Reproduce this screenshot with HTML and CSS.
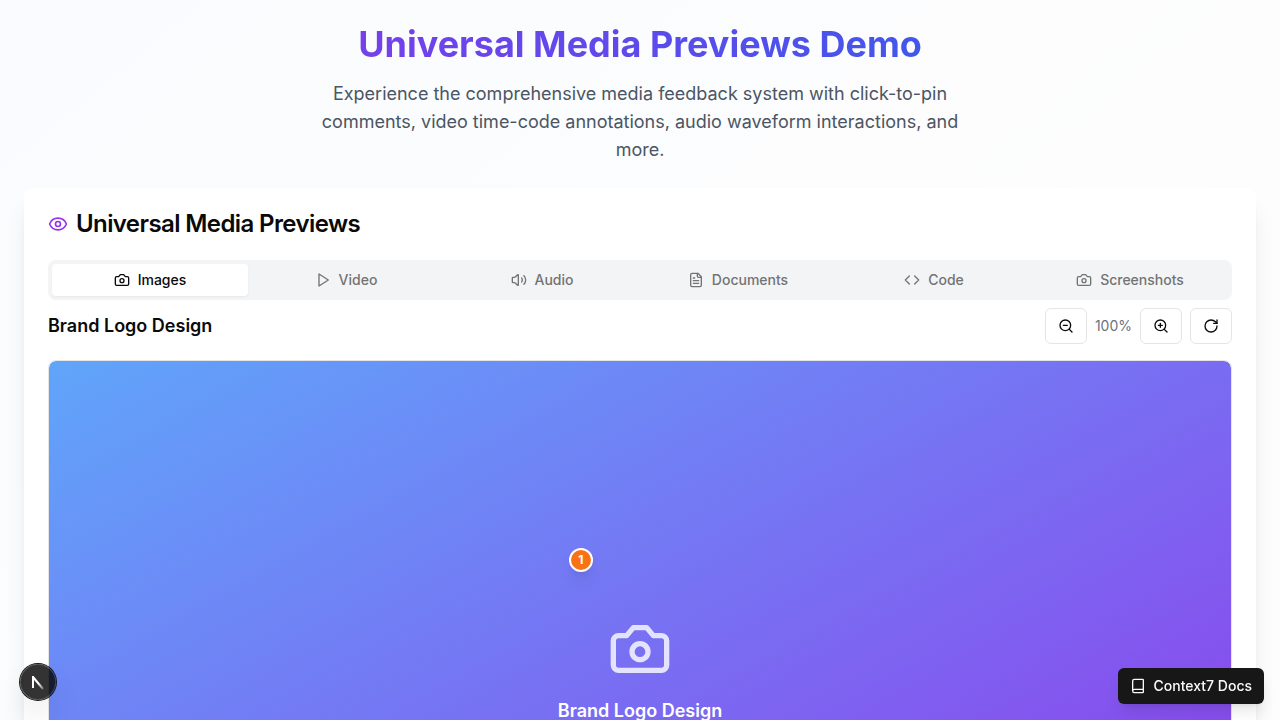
FILE: index.html
```html
<!DOCTYPE html>
<html lang="en">
<head>
<meta charset="utf-8">
<meta name="viewport" content="width=device-width, initial-scale=1">
<title>Universal Media Previews Demo</title>
<link rel="stylesheet" href="styles.css">
</head>
<body>
<svg class="sprite" aria-hidden="true">
  <symbol id="camera" viewBox="0 0 24 24"><path d="M14.5 4h-5L7 7H4a2 2 0 0 0-2 2v9a2 2 0 0 0 2 2h16a2 2 0 0 0 2-2V9a2 2 0 0 0-2-2h-3l-2.500-3z"/><circle cx="12" cy="13" r="3"/></symbol>
</svg>
<main class="page">
  <header class="intro">
    <h1 class="intro-title">Universal Media Previews Demo</h1>
    <p class="intro-text">Experience the comprehensive media feedback system with click-to-pin comments, video time-code annotations, audio waveform interactions, and more.</p>
  </header>
  <section class="card">
    <h2 class="card-title">
      <svg class="icon icon-eye" viewBox="0 0 24 24"><path d="M2.062 12.348a1 1 0 0 1 0-.696 10.750 10.750 0 0 1 19.876 0 1 1 0 0 1 0 .696 10.750 10.750 0 0 1-19.876 0"/><circle cx="12" cy="12" r="3"/></svg>
      Universal Media Previews
    </h2>
    <div class="tabs" role="tablist">
      <button class="tab tab-active" role="tab" aria-selected="true"><svg class="icon"><use href="#camera"/></svg>Images</button>
      <button class="tab" role="tab" aria-selected="false"><svg class="icon" viewBox="0 0 24 24"><path d="M6 3l14 9-14 9V3z"/></svg>Video</button>
      <button class="tab" role="tab" aria-selected="false"><svg class="icon" viewBox="0 0 24 24"><path d="M11 4.702a.705.705 0 0 0-1.203-.498L6.413 7.587A1.400 1.400 0 0 1 5.416 8H3a1 1 0 0 0-1 1v6a1 1 0 0 0 1 1h2.416a1.400 1.400 0 0 1 .997.413l3.383 3.384A.705.705 0 0 0 11 19.298z"/><path d="M16 9a5 5 0 0 1 0 6"/><path d="M19.364 18.364a9 9 0 0 0 0-12.728"/></svg>Audio</button>
      <button class="tab" role="tab" aria-selected="false"><svg class="icon" viewBox="0 0 24 24"><path d="M15 2H6a2 2 0 0 0-2 2v16a2 2 0 0 0 2 2h12a2 2 0 0 0 2-2V7Z"/><path d="M14 2v4a2 2 0 0 0 2 2h4M10 9H8M16 13H8M16 17H8"/></svg>Documents</button>
      <button class="tab" role="tab" aria-selected="false"><svg class="icon" viewBox="0 0 24 24"><path d="M16 18l6-6-6-6M8 6l-6 6 6 6"/></svg>Code</button>
      <button class="tab" role="tab" aria-selected="false"><svg class="icon"><use href="#camera"/></svg>Screenshots</button>
    </div>
    <div class="toolbar">
      <h3 class="asset-name">Brand Logo Design</h3>
      <div class="zoom-controls">
        <button class="tool" aria-label="Zoom out"><svg class="icon" viewBox="0 0 24 24"><circle cx="11" cy="11" r="8"/><path d="M21 21l-4.350-4.350M8 11h6"/></svg></button>
        <span class="zoom-level">100%</span>
        <button class="tool" aria-label="Zoom in"><svg class="icon" viewBox="0 0 24 24"><circle cx="11" cy="11" r="8"/><path d="M21 21l-4.350-4.350M11 8v6M8 11h6"/></svg></button>
        <button class="tool" aria-label="Reset view"><svg class="icon" viewBox="0 0 24 24"><path d="M21 12a9 9 0 1 1-9-9c2.520 0 4.930 1 6.740 2.740L21 8"/><path d="M21 3v5h-5"/></svg></button>
      </div>
    </div>
    <div class="canvas">
      <svg class="icon icon-large"><use href="#camera"/></svg>
      <p class="canvas-title">Brand Logo Design</p>
      <button class="pin" aria-label="Comment 1">1</button>
    </div>
  </section>
</main>
<button class="dev-badge" aria-label="Open developer tools"><svg class="dev-mark" viewBox="0 0 36 36"><defs><linearGradient id="fade" gradientUnits="userSpaceOnUse" x1="19" y1="19" x2="24" y2="26"><stop stop-color="#fff"/><stop offset="1" stop-color="#fff" stop-opacity=".2"/></linearGradient></defs><path d="M13 13l10 12" stroke="url(#fade)"/><path d="M13 24V12"/></svg></button>
<button class="docs"><svg class="icon" viewBox="0 0 24 24"><path d="M4 19.500v-15A2.500 2.500 0 0 1 6.500 2H19a1 1 0 0 1 1 1v18a1 1 0 0 1-1 1H6.500a1 1 0 0 1 0-5H20"/></svg>Context7 Docs</button>
</body>
</html>
```
FILE: styles.css
```css
* { box-sizing: border-box; margin: 0; }
html { scrollbar-width: none; }
body {
  font-family: Inter, "Liberation Sans", sans-serif;
  color: #0a0a0a;
  background: linear-gradient(to bottom right, #f9fbfe, #fdfdfd 50%, #fcfcfd);
}
button { font: inherit; color: inherit; border: 0; cursor: pointer; }
.sprite { position: absolute; width: 0; height: 0; }
.icon {
  width: 16px; height: 16px; flex: none;
  fill: none; stroke: currentColor; stroke-width: 2;
  stroke-linecap: round; stroke-linejoin: round;
}
.page { padding: 24px; min-height: 100vh; }
.intro { text-align: center; margin-bottom: 24px; }
.intro-title {
  font-size: 36px; line-height: 40px; font-weight: 700; margin-bottom: 16px;
  color: transparent;
  background: linear-gradient(to right, #9333ea, #2563eb);
  -webkit-background-clip: text; background-clip: text;
}
.intro-text { max-width: 672px; margin: 0 auto; font-size: 18px; line-height: 28px; color: #4b5563; }
.card {
  padding: 24px; border-radius: 8px; background: #fff;
  box-shadow: 0 20px 25px -5px rgba(0, 0, 0, .1), 0 8px 10px -6px rgba(0, 0, 0, .1);
}
.card-title {
  display: flex; align-items: center; gap: 8px;
  font-size: 24px; line-height: 24px; font-weight: 600; letter-spacing: -0.025em;
  margin-bottom: 24px;
}
.icon-eye { width: 20px; height: 20px; color: #9333ea; }
.tabs {
  display: grid; grid-template-columns: repeat(6, 1fr);
  padding: 4px; border-radius: 8px; background: #f3f4f6;
}
.tab {
  display: flex; align-items: center; justify-content: center; gap: 8px;
  padding: 6px 12px; border-radius: 4px; background: transparent;
  font-size: 14px; line-height: 20px; font-weight: 500; color: #737373;
}
.tab-active { background: #fff; color: #0a0a0a; box-shadow: 0 1px 2px rgba(0, 0, 0, .05); }
.toolbar { display: flex; align-items: center; justify-content: space-between; margin: 8px 0 16px; }
.asset-name { font-size: 18px; line-height: 28px; font-weight: 600; }
.zoom-controls { display: flex; align-items: center; gap: 8px; }
.tool {
  display: flex; align-items: center; padding: 9px 12px;
  border: 1px solid #e5e5e5; border-radius: 6px; background: #fff;
}
.zoom-level { font-size: 14px; line-height: 20px; color: #6b7280; }
.canvas {
  position: relative; aspect-ratio: 16 / 9;
  display: flex; flex-direction: column; align-items: center;
  padding-top: 256px; border: 1px solid #e5e5e5; border-radius: 8px;
  background: linear-gradient(to bottom right, #60a5fa, #9333ea) padding-box;
  color: #fff;
}
.icon-large { width: 64px; height: 64px; margin-bottom: 16px; opacity: .8; }
.canvas-title { font-size: 18px; line-height: 28px; font-weight: 600; }
.pin {
  position: absolute; left: 45%; top: 30%; transform: translate(-50%, -50%);
  width: 24px; height: 24px; padding: 0; border: 2px solid #fff; border-radius: 50%;
  background: #f97316; font-size: 12px; line-height: 20px; font-weight: 700;
  box-shadow: 0 10px 15px -3px rgba(0, 0, 0, .1), 0 4px 6px -4px rgba(0, 0, 0, .1);
}
.dev-badge {
  position: fixed; left: 20px; bottom: 20px; width: 36px; height: 36px; padding: 0;
  border-radius: 50%; background: rgba(0, 0, 0, .8);
  box-shadow: 0 0 0 1px #171717, inset 0 0 0 1px rgba(255, 255, 255, .14), 0 16px 32px -8px rgba(0, 0, 0, .24);
}
.dev-mark { display: block; width: 36px; height: 36px; fill: none; stroke: #fff; stroke-width: 2; }
.docs {
  position: fixed; right: 16px; bottom: 16px;
  display: flex; align-items: center; gap: 8px; padding: 8px 12px;
  border-radius: 6px; background: #171717; color: #fafafa;
  font-size: 14px; line-height: 20px; font-weight: 500;
  box-shadow: 0 10px 15px -3px rgba(0, 0, 0, .1), 0 4px 6px -4px rgba(0, 0, 0, .1);
}
```
